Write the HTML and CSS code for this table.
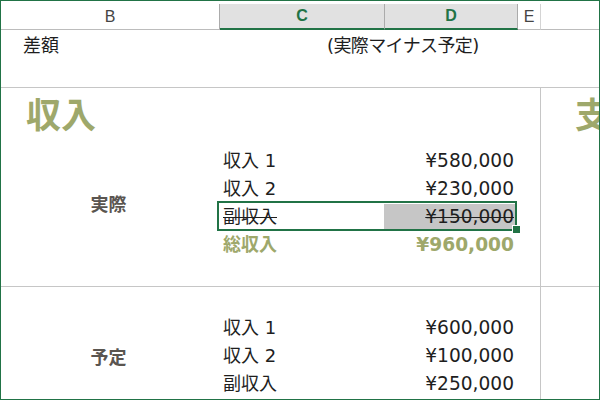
FILE: index.html
```html
<!DOCTYPE html>
<html lang="ja">
<head>
<meta charset="utf-8">
<title>収入</title>
<link rel="stylesheet" href="styles.css">
</head>
<body>
<div class="sheet">
  <div class="colhead">
    <div class="hc hc-b">B</div>
    <div class="hc hc-c sel">C</div>
    <div class="hc hc-d sel">D</div>
    <div class="hc hc-e">E</div>
    <div class="hc hc-f"></div>
  </div>

  <div class="row-diff">
    <div class="cell diff-label">差額</div>
    <div class="cell diff-note">(実際マイナス予定)</div>
    <div class="cell diff-f"></div>
  </div>

  <div class="section sec-actual">
    <div class="title">収入</div>
    <div class="group">実際</div>
    <div class="c r1">収入 1</div><div class="d r1">¥580,000</div>
    <div class="c r2">収入 2</div><div class="d r2">¥230,000</div>
    <div class="c r3 strike">副収入</div><div class="d r3 fill"><span class="strike">¥150,000</span></div>
    <div class="selbox r3"></div>
    <div class="c r4 total">総収入</div><div class="d r4 total">¥960,000</div>
    <div class="fcol"><span class="title title-f">支</span></div>
  </div>

  <div class="section sec-plan">
    <div class="group">予定</div>
    <div class="c r1">収入 1</div><div class="d r1">¥600,000</div>
    <div class="c r2">収入 2</div><div class="d r2">¥100,000</div>
    <div class="c r3">副収入</div><div class="d r3">¥250,000</div>
    <div class="fcol"></div>
  </div>
</div>
</body>
</html>
```

FILE: styles.css
```css
* { box-sizing: border-box; margin: 0; padding: 0; }
html, body { background: #fff; }
body {
  margin: 0;
  font-family: "DejaVu Sans", "Noto Sans CJK JP", sans-serif;
  color: #1e1e1e;
}
.sheet {
  width: 600px;
  height: 400px;
  border: 1px solid #217346;
  overflow: hidden;
  background: #fff;
}

/* column headers */
.colhead {
  height: 29px;
  padding-top: 3px;
  display: flex;
}
.hc {
  height: 26px;
  border-bottom: 1px solid #bcbcbc;
  border-right: 1px solid #d4d4d4;
  font-family: "Liberation Sans", "Noto Sans", sans-serif;
  font-size: 16px;
  line-height: 25px;
  text-align: center;
  color: #444;
}
.hc.sel {
  background: #e1e1e1;
  border-bottom: 2px solid #217346;
  border-right-color: #ababab;
  color: #217346;
  font-weight: bold;
  line-height: 24px;
}
.hc-b { width: 219px; border-right-color: #ababab; }
.hc-c { width: 165px; }
.hc-d { width: 133px; }
.hc-e { width: 23px; }
.hc-f { flex: 1; border-right: none; }

/* grid shared */
.row-diff, .section {
  display: grid;
  grid-template-columns: 219px 165px 133px 22px 1fr;
}

.row-diff {
  height: 58px;
  border-bottom: 1px solid #c6c6c6;
  font-size: 18px;
  line-height: 24px;
}
.diff-label { grid-column: 1; padding: 4px 0 0 22px; }
.diff-note { grid-column: 2 / 5; padding: 4px 0 0 107px; white-space: nowrap; letter-spacing: -0.6px; }
.diff-f { grid-column: 5; }

.section {
  border-bottom: 1px solid #c6c6c6;
  font-size: 18px;
}
.sec-actual {
  height: 199px;
  grid-template-rows: 59px repeat(4, 28px) 1fr;
}
.sec-plan {
  height: 113px;
  border-bottom: none;
  grid-template-rows: 27px repeat(3, 28px) 1fr;
}

.title {
  grid-column: 1;
  grid-row: 1;
  padding: 8px 0 0 25px;
  font-size: 35px;
  line-height: 40px;
  font-weight: bold;
  color: #9ea86b;
}
.title-f { display: block; padding-left: 34px; }

.group {
  grid-column: 1;
  display: flex;
  align-items: center;
  justify-content: center;
  font-weight: bold;
  font-size: 18px;
  color: #5a5550;
  padding-right: 4px;
}
.sec-actual .group { grid-row: 2 / 6; }
.sec-plan .group { grid-row: 2 / 5; }

.c, .d { line-height: 28px; white-space: nowrap; }
.c { grid-column: 2; padding-left: 3px; }
.d { grid-column: 3; text-align: right; padding-right: 4px; font-size: 18.6px; }
.r1 { grid-row: 2; }
.r2 { grid-row: 3; }
.r3 { grid-row: 4; }
.r4 { grid-row: 5; }

.total { font-weight: bold; color: #9ea86b; }
.strike { text-decoration: line-through; text-decoration-thickness: 1px; }

.fill {
  background: #c6c6c6;
  margin: 1px 2px 2px -1px;
  line-height: 25px;
  padding-right: 2px;
}

.selbox {
  grid-column: 2 / 4;
  position: relative;
  pointer-events: none;
}
.selbox::before {
  content: "";
  position: absolute;
  top: -2px; bottom: 0; left: -3px; right: 1px;
  border: 2px solid #217346;
}
.selbox::after {
  content: "";
  position: absolute;
  width: 7px; height: 7px;
  right: -3px; bottom: -3px;
  background: #217346;
  border: 1px solid #fff;
}

.fcol {
  grid-column: 5;
  grid-row: 1 / -1;
  border-left: 1px solid #c6c6c6;
}
.sec-actual .fcol { padding-top: 8px; }
.fcol .title { padding: 0 0 0 34px; }
```
